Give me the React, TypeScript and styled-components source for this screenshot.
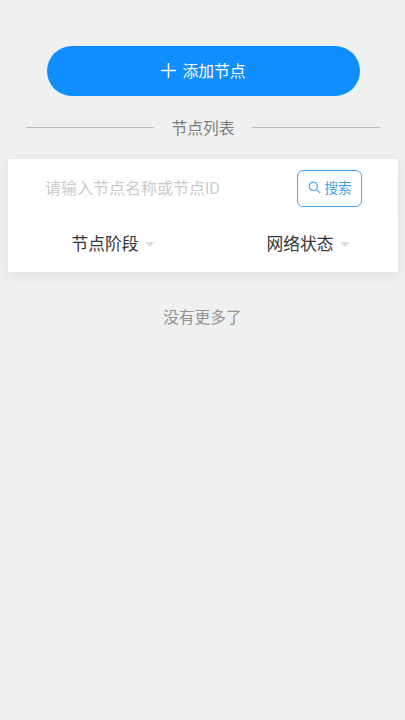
import styled, { createGlobalStyle } from 'styled-components';

const GlobalStyle = createGlobalStyle`
  html, body {
    margin: 0;
    padding: 0;
    background: #eff0f0;
    font-family: "Roboto", "Noto Sans CJK SC", sans-serif;
  }
`;

const Page = styled.div`
  min-height: 720px;
  padding-top: 46px;
  box-sizing: border-box;
`;

const AddButton = styled.div`
  width: 313px;
  height: 50px;
  margin: 0 0 0 46.5px;
  padding-bottom: 2px;
  box-sizing: border-box;
  border-radius: 25px;
  background: #0e8eff;
  color: #fff;
  font-size: 15.75px;
  display: flex;
  align-items: center;
  justify-content: center;
  gap: 7px;
`;

const PlusIcon = styled.svg`
  width: 15px;
  height: 15px;
  margin-top: 1px;
`;

const Divider = styled.div`
  display: flex;
  align-items: center;
  justify-content: space-between;
  margin: 20px 25px 0 26px;
  height: 22px;
  color: #7c7d7e;
  font-size: 15.75px;
  padding-bottom: 1px;
  &::before,
  &::after {
    content: '';
    height: 1px;
    width: 128px;
    background: #b8b9b9;
  }
`;

const Card = styled.div`
  margin: 20px 7px 0 8px;
  background: #fff;
  box-shadow: 0 3px 12px rgba(0, 0, 0, 0.07);
`;

const SearchRow = styled.div`
  height: 58px;
  display: flex;
  align-items: center;
  justify-content: space-between;
  padding: 0 36px 0 37px;
  box-shadow: 0 2px 4px rgba(0, 0, 0, 0.015);
`;

const Placeholder = styled.div`
  color: #c9cacb;
  font-size: 16px;
  margin-bottom: 3px;
`;

const SearchButton = styled.div`
  width: 65px;
  height: 37px;
  box-sizing: border-box;
  border: 1.5px solid #4aa6ec;
  border-radius: 6px;
  color: #3f9fe6;
  font-size: 13.5px;
  padding-bottom: 2px;
  display: flex;
  align-items: center;
  justify-content: center;
  gap: 4px;
`;

const FilterRow = styled.div`
  height: 55px;
  display: grid;
  grid-template-columns: 1fr 1fr;
`;

const Filter = styled.div`
  display: flex;
  align-items: center;
  justify-content: center;
  gap: 6px;
  color: #343536;
  font-size: 16.75px;
  padding: 0 0 3px 15px;
`;

const Caret = styled.span`
  width: 0;
  height: 0;
  border-left: 5px solid transparent;
  border-right: 5px solid transparent;
  border-top: 5px solid #dcdddd;
  margin-top: 2px;
`;

const EndNote = styled.div`
  margin-top: 33px;
  text-align: center;
  color: #929394;
  font-size: 15.75px;
`;

const App = () => {
  return (
    <>
      <GlobalStyle />
      <Page>
        <AddButton>
          <PlusIcon viewBox="0 0 15 15" fill="none" stroke="#fff" strokeWidth="1.5">
            <path d="M0 7.5H15M7.5 0V15" />
          </PlusIcon>
          添加节点
        </AddButton>
        <Divider>节点列表</Divider>
        <Card>
          <SearchRow>
            <Placeholder>请输入节点名称或节点ID</Placeholder>
            <SearchButton>
              <svg width="13" height="13" viewBox="0 0 13 13" fill="none" stroke="#4aa6ec" strokeWidth="1.2">
                <circle cx="5.3" cy="5.3" r="4.2" />
                <path d="M8.4 8.4L12.2 12.2" />
              </svg>
              搜索
            </SearchButton>
          </SearchRow>
          <FilterRow>
            <Filter>
              节点阶段
              <Caret />
            </Filter>
            <Filter>
              网络状态
              <Caret />
            </Filter>
          </FilterRow>
        </Card>
        <EndNote>没有更多了</EndNote>
      </Page>
    </>
  );
};

export default App;
